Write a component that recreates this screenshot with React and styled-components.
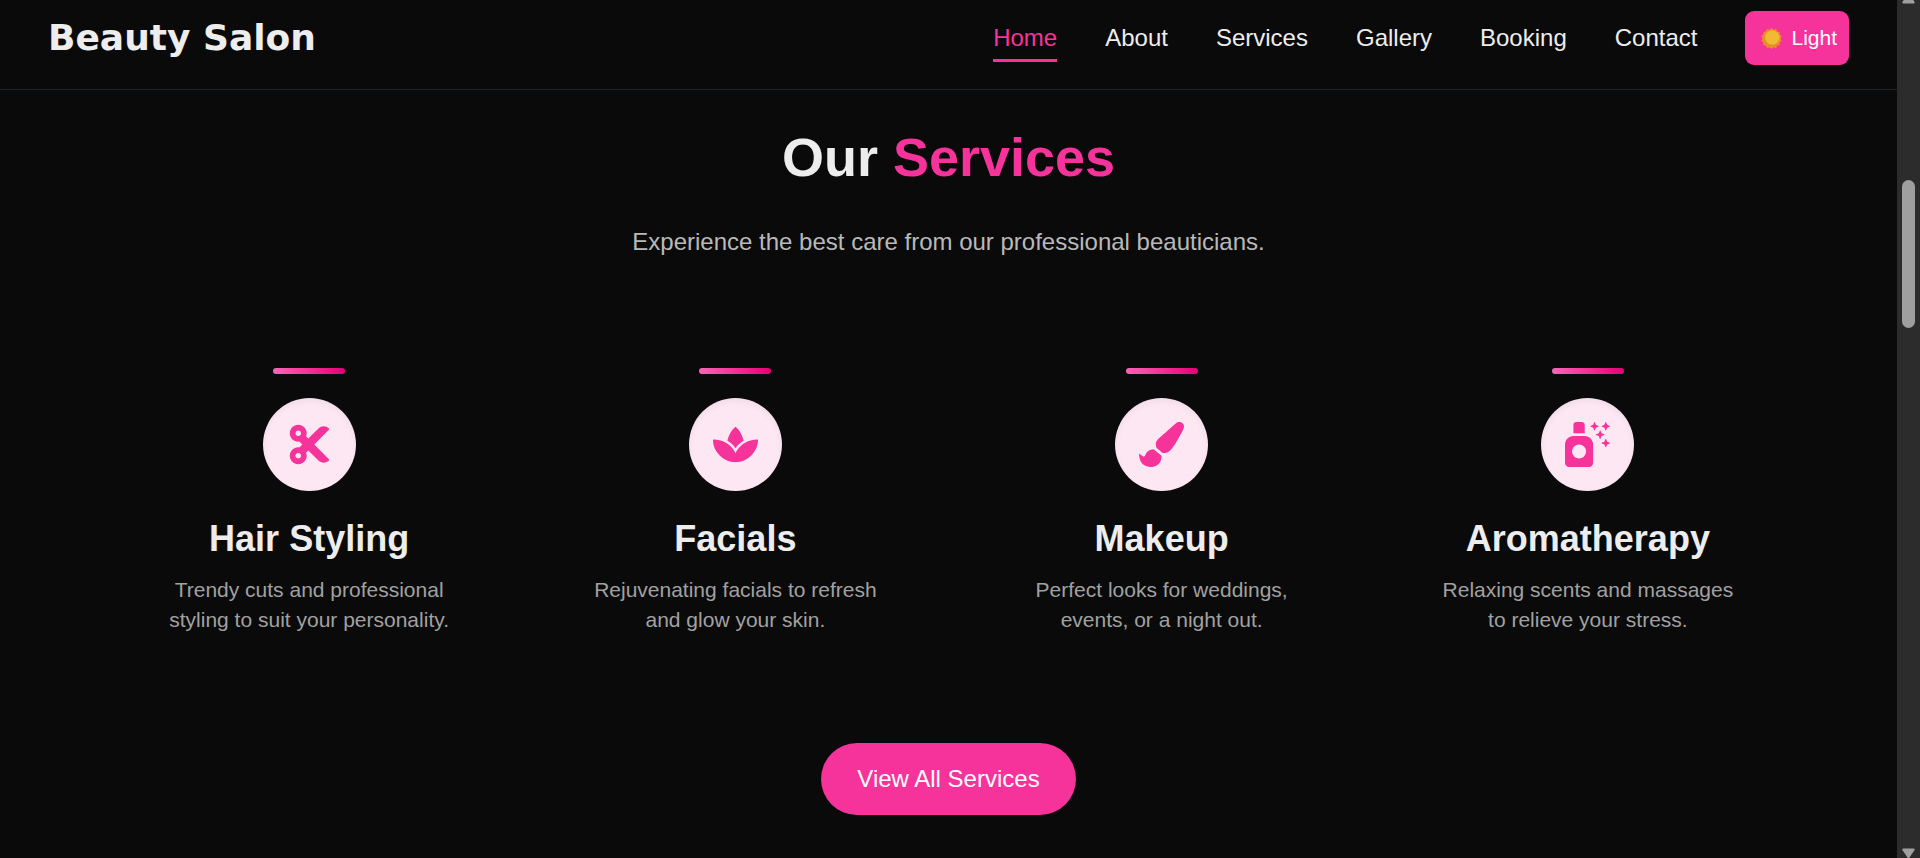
import React from "react";
import styled, { createGlobalStyle } from "styled-components";
import { FaCut, FaSpa, FaPaintBrush } from "react-icons/fa";
import { FaSprayCanSparkles } from "react-icons/fa6";

const NAV_LINKS = ["Home", "About", "Services", "Gallery", "Booking", "Contact"];

const SERVICES = [
  { title: "Hair Styling", text: "Trendy cuts and professional styling to suit your personality.", Icon: FaCut },
  { title: "Facials", text: "Rejuvenating facials to refresh and glow your skin.", Icon: FaSpa },
  { title: "Makeup", text: "Perfect looks for weddings, events, or a night out.", Icon: FaPaintBrush },
  { title: "Aromatherapy", text: "Relaxing scents and massages to relieve your stress.", Icon: FaSprayCanSparkles },
];

const sunPoints = Array.from({ length: 28 }, (_, i) => {
  const angle = (i * Math.PI) / 14;
  const radius = i % 2 ? 9 : 10.5;
  return `${(10.5 + radius * Math.sin(angle)).toFixed(2)},${(10.5 - radius * Math.cos(angle)).toFixed(2)}`;
}).join(" ");

const SunIcon = () => (
  <Sun viewBox="0 0 21 21" aria-hidden="true">
    <polygon points={sunPoints} fill="#f58a2b" />
    <circle cx="10.5" cy="10.5" r="7.8" fill="#d3951f" />
    <circle cx="11.2" cy="9.6" r="7.2" fill="#f2b936" />
  </Sun>
);

const ServiceCard = ({ title, text, Icon }) => (
  <Card>
    <Accent />
    <IconCircle>
      <Icon />
    </IconCircle>
    <CardTitle>{title}</CardTitle>
    <CardText>{text}</CardText>
  </Card>
);

const App = () => {
  return (
    <Shell>
      <GlobalStyle />
      <Page>
        <Header>
          <Logo href="#home">Beauty Salon</Logo>
          <Nav>
            {NAV_LINKS.map((label) => (
              <NavLink key={label} href={`#${label.toLowerCase()}`} $active={label === "Home"}>
                {label}
              </NavLink>
            ))}
            <ThemeButton type="button">
              <SunIcon />
              Light
            </ThemeButton>
          </Nav>
        </Header>
        <Section id="services">
          <Title>
            Our <Highlight>Services</Highlight>
          </Title>
          <Subtitle>Experience the best care from our professional beauticians.</Subtitle>
          <Grid>
            {SERVICES.map((service) => (
              <ServiceCard key={service.title} {...service} />
            ))}
          </Grid>
          <ViewAll href="#services">View All Services</ViewAll>
        </Section>
      </Page>
      <ScrollTrack aria-hidden="true">
        <Arrow viewBox="0 0 15 12">
          <path d="M7.5 1 L13.6 10 Q14 11.5 12.6 11.5 H2.4 Q1 11.5 1.4 10 Z" />
        </Arrow>
        <ScrollThumb />
        <Arrow viewBox="0 0 15 12">
          <path d="M7.5 11 L1.4 2 Q1 0.5 2.4 0.5 H12.6 Q14 0.5 13.6 2 Z" />
        </Arrow>
      </ScrollTrack>
    </Shell>
  );
};

const GlobalStyle = createGlobalStyle`
  * {
    box-sizing: border-box;
  }
  body {
    margin: 0;
    background-color: #0a0a0a;
    color: #ededed;
    font-family: Arial, "Liberation Sans", sans-serif;
    font-size: 24px;
    line-height: 36px;
  }
`;

const Shell = styled.div`
  display: flex;
  height: 100vh;
  overflow: hidden;
`;
const Page = styled.div`
  flex: 1;
  min-width: 0;
`;
const Header = styled.header`
  display: flex;
  align-items: center;
  justify-content: space-between;
  padding: 11px 48px 24px;
  border-bottom: 1px solid #1e2529;
`;
const Logo = styled.a`
  color: inherit;
  font-family: "Arial Black", "DejaVu Sans", sans-serif;
  font-size: 36px;
  font-weight: 900;
  line-height: 48px;
  text-decoration: none;
`;
const Nav = styled.nav`
  display: flex;
  align-items: center;
  gap: 48px;
`;
const NavLink = styled.a`
  position: relative;
  color: ${({ $active }) => ($active ? "#f6339a" : "inherit")};
  text-decoration: none;
  &::after {
    content: "";
    display: ${({ $active }) => ($active ? "block" : "none")};
    position: absolute;
    left: 0;
    bottom: -6px;
    width: 100%;
    height: 3px;
    background-color: #f6339a;
  }
`;
const ThemeButton = styled.button`
  display: flex;
  align-items: center;
  gap: 9px;
  height: 54px;
  padding: 0 12px 0 16px;
  border: 0;
  border-radius: 9px;
  background-color: #f6339a;
  color: white;
  font-family: inherit;
  font-size: 21px;
  cursor: pointer;
`;
const Sun = styled.svg`
  width: 21px;
  height: 21px;
`;
const Section = styled.section`
  display: flex;
  flex-direction: column;
  align-items: center;
  padding: 27px 120px 0;
`;
const Title = styled.h2`
  margin: 0 0 26px;
  font-size: 54px;
  line-height: 81px;
`;
const Highlight = styled.span`
  color: #f6339a;
`;
const Subtitle = styled.p`
  margin: 0 0 108px;
  color: #b9b9b9;
`;
const Grid = styled.div`
  display: grid;
  grid-template-columns: repeat(4, 1fr);
  gap: 48px;
  width: 100%;
  margin-bottom: 72px;
`;
const Card = styled.article`
  display: flex;
  flex-direction: column;
  align-items: center;
  padding: 0 36px 36px;
  text-align: center;
`;
const Accent = styled.div`
  width: 72px;
  height: 6px;
  margin-bottom: 24px;
  border-radius: 3px;
  background: linear-gradient(to right, #fb64b6, #e60076);
`;
const IconCircle = styled.div`
  display: flex;
  align-items: center;
  justify-content: center;
  width: 93px;
  height: 93px;
  margin-bottom: 24px;
  border-radius: 50%;
  background-color: #fce7f3;
  box-shadow: inset 0 3px 6px rgba(0, 0, 0, 0.05);
  color: #f6339a;
  font-size: 45px;
`;
const CardTitle = styled.h3`
  margin: 0 0 12px;
  font-size: 36px;
  line-height: 48px;
`;
const CardText = styled.p`
  margin: 0;
  color: #a1a1a1;
  font-size: 21px;
  line-height: 30px;
`;
const ViewAll = styled.a`
  padding: 18px 36px;
  border-radius: 36px;
  background-color: #f6339a;
  color: white;
  text-decoration: none;
`;
const ScrollTrack = styled.div`
  display: flex;
  flex-direction: column;
  align-items: center;
  justify-content: space-between;
  position: relative;
  width: 23px;
  margin: -8px 0 -2px;
  background-color: #2c2c2c;
`;
const ScrollThumb = styled.div`
  position: absolute;
  top: 188px;
  width: 13px;
  height: 148px;
  border-radius: 7px;
  background-color: #9f9f9f;
`;
const Arrow = styled.svg`
  width: 15px;
  height: 12px;
  fill: #9f9f9f;
`;

export default App;
